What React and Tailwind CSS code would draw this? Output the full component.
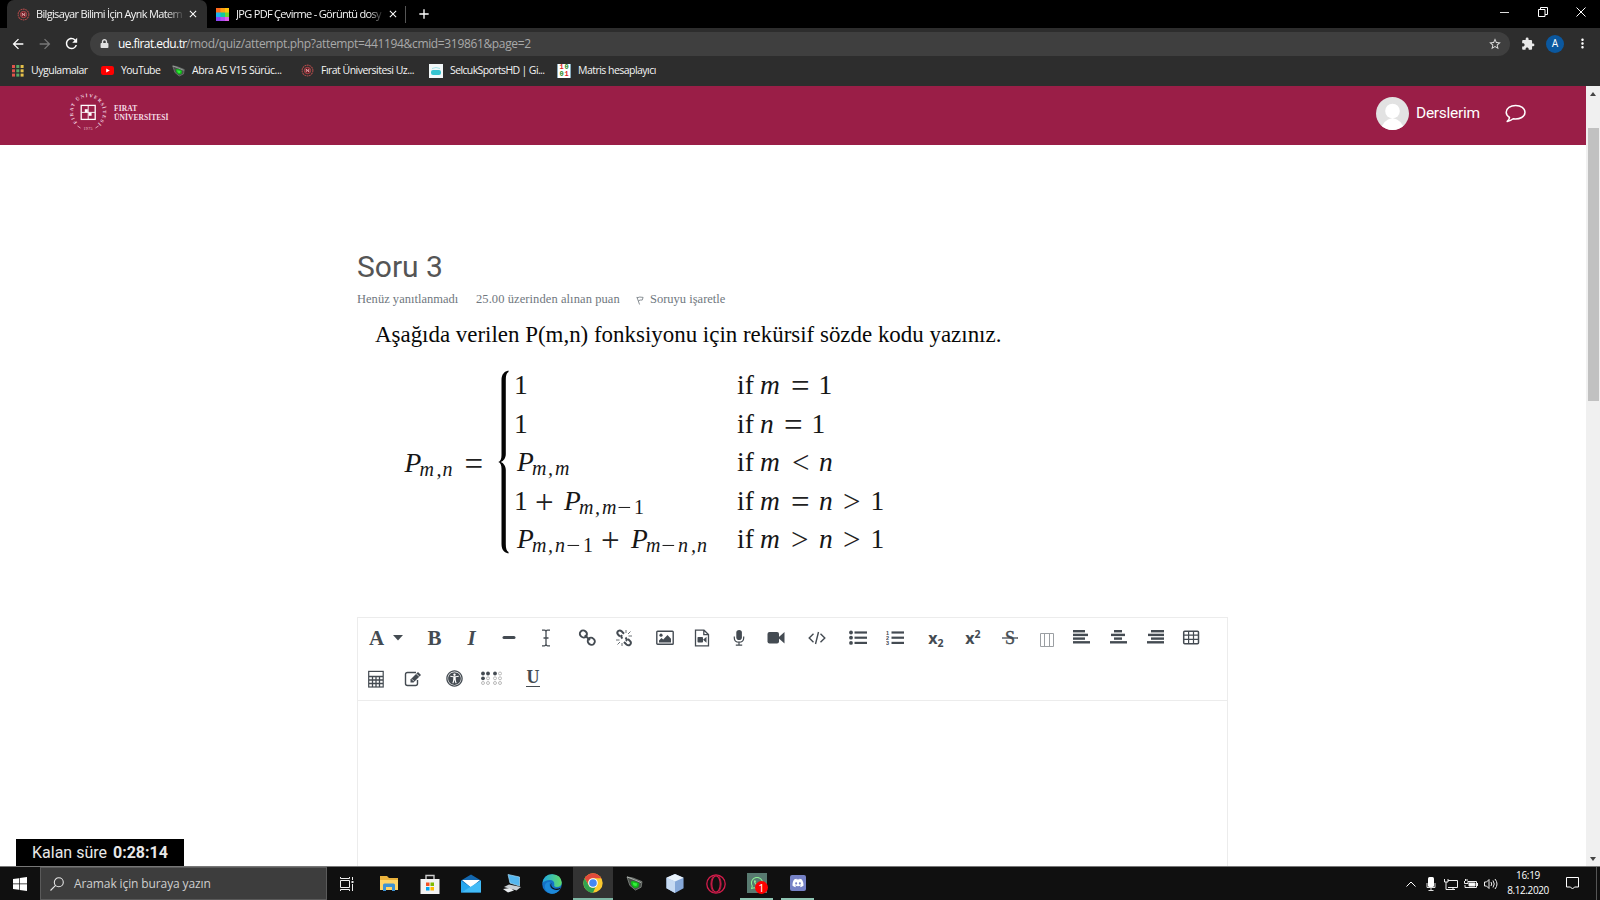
import React from "react";
import { FaUniversalAccess, FaDiscord, FaWhatsapp, FaLock } from "react-icons/fa";
import { MdExtension, MdRefresh, MdArrowBack, MdArrowForward, MdStarBorder, MdMoreVert, MdAdd, MdClose } from "react-icons/md";

const ui = "font-['Open_Sans','Noto_Sans',sans-serif] whitespace-nowrap";

function UniIcon({ className }) {
  return (
    <svg viewBox="0 0 14 14" className={className} fill="none">
      <circle cx="7" cy="7" r="5.8" stroke="#b04a4a" strokeWidth="1.1" strokeDasharray="2 .6" />
      <circle cx="7" cy="7" r="3.4" fill="#6d1520" stroke="#c25a5a" strokeWidth=".8" />
      <path d="M5.7 8.8V5.4L8.3 8.6V5.2" stroke="#e9b9b9" strokeWidth=".9" />
    </svg>
  );
}

function MonsterIcon({ className }) {
  return (
    <svg viewBox="0 0 18 16" className={className}>
      <path d="M1 1L7 2L17 6L16 12L10 15L4 10Z" fill="#4a4f4b" stroke="#8a908b" strokeWidth=".8" />
      <path d="M1 1L9 4L16 7" stroke="#b5bab6" fill="none" />
      <path d="M5 6Q9 4 14 8L13 12L9 13Q5 10 5 6Z" fill="#12b81a" />
      <path d="M7 7L12 8L11 11L8 10Z" fill="#35f03c" />
    </svg>
  );
}

function TabStrip() {
  return (
    <div className="flex h-[28px] bg-black pl-[7px]">
      <div className="flex h-full w-[200px] items-center rounded-t-[7px] bg-[#2d2d2d] pl-[10px]">
        <UniIcon className="h-[13px] w-[13px] shrink-0" />
        <span className={`${ui} ml-[6px] w-[149px] text-[11px] tracking-[-0.660px] text-[#f4f4f4] [mask-image:linear-gradient(90deg,black_88%,transparent)]`}>
          Bilgisayar Bilimi İçin Ayrık Matem
        </span>
        <MdClose className="ml-[2px] h-[12px] w-[12px] shrink-0 text-white" />
      </div>
      <div className="flex h-full w-[199px] items-center pl-[9px]">
        <svg viewBox="0 0 13 13" className="h-[13px] w-[13px] shrink-0">
          <rect width="5" height="5" fill="#ff6a1c" /><rect x="4.5" width="4.5" height="5" fill="#ffa011" /><rect x="9" width="4" height="5" fill="#ffc40d" />
          <rect y="4.5" width="5" height="4.5" fill="#19b5f1" /><rect x="4.5" y="4.5" width="4.5" height="4.5" fill="#10c9a0" /><rect x="9" y="4.5" width="4" height="4.5" fill="#6fd62d" />
          <rect y="9" width="5" height="4" fill="#8b46f5" /><rect x="4.5" y="9" width="4.5" height="4" fill="#b14cf2" /><rect x="9" y="9" width="4" height="4" fill="#e05ce8" />
        </svg>
        <span className={`${ui} ml-[7px] w-[148px] text-[11px] tracking-[-0.680px] text-[#f4f4f4] [mask-image:linear-gradient(90deg,black_90%,transparent)]`}>
          JPG PDF Çevirme - Görüntü dosy
        </span>
        <MdClose className="ml-[3px] h-[12px] w-[12px] shrink-0 text-white" />
        <div className="ml-[6px] h-[17px] w-px shrink-0 bg-[#555]" />
      </div>
      <div className="flex items-center pl-[10px]">
        <MdAdd className="h-[16px] w-[16px] text-white" />
      </div>
      <div className="ml-auto flex h-[24px] items-center text-white">
        <svg viewBox="0 0 9 9" className="h-[9px] w-[9px]"><path d="M0 4.5H9" stroke="#ddd" /></svg>
        <svg viewBox="0 0 10 10" className="ml-[29px] h-[10px] w-[10px]" fill="none" stroke="#fff"><path d="M.5 2.5H7V9.5H.5ZM2.5 2.5V.5H9.5V7.5H7" /></svg>
        <svg viewBox="0 0 10 10" className="mr-[14px] ml-[28px] h-[10px] w-[10px]" stroke="#fff"><path d="M.5 .5L9.5 9.5M9.5 .5L.5 9.5" /></svg>
      </div>
    </div>
  );
}

function AddressBar() {
  return (
    <div className="flex h-[31px] items-center bg-[#2d2d2d]">
      <MdArrowBack className="ml-[10px] h-[16px] w-[16px] text-white" />
      <MdArrowForward className="ml-[11px] h-[16px] w-[16px] text-[#777]" />
      <MdRefresh className="ml-[10px] h-[17px] w-[17px] text-white" />
      <div className="ml-[10px] flex h-[24px] w-[1420px] items-center rounded-full bg-[#3f3f3f] pl-[10px]">
        <FaLock className="h-[9px] w-[9px] text-[#e0e0e0]" />
        <span className={`${ui} ml-[9px] flex-1 text-[12px] text-[#a9a9a9]`}>
          <span className="inline-block w-[68px] tracking-[-0.560px] text-white">ue.firat.edu.tr</span>
          <span className="tracking-[-0.345px]">/mod/quiz/attempt.php?attempt=441194&amp;cmid=319861&amp;page=2</span>
        </span>
        <MdStarBorder className="mr-[8px] h-[14px] w-[14px] text-[#ddd]" />
      </div>
      <MdExtension className="ml-[11px] h-[14px] w-[14px] text-[#e8e8e8]" />
      <div className="ml-[11px] flex h-[18px] w-[18px] items-center justify-center rounded-full bg-[#0b589f] font-['Roboto',sans-serif] text-[10px] text-white">A</div>
      <MdMoreVert className="ml-[11px] h-[15px] w-[15px] text-white" />
    </div>
  );
}

function Bookmark({ width, icon, children, track }) {
  return (
    <div className={`flex items-center ${width}`}>
      {icon}
      <span className={`${ui} ml-[7px] text-[10.500px] text-[#f4f4f4] ${track}`}>{children}</span>
    </div>
  );
}

function Bookmarks() {
  const cols = [["#e0544b", 0], ["#58a866", 4.3], ["#e5c04a", 8.6]];
  return (
    <div className="flex h-[27px] items-start bg-[#2d2d2d] pl-[12px] pt-[4px]">
      <Bookmark width="w-[89px]" track="tracking-[-0.480px]" icon={
        <svg viewBox="0 0 12 12" className="h-[12px] w-[12px] shrink-0">
          {cols.map(([c, x]) => [0, 4.3, 8.6].map((y) => <rect key={x + "-" + y} x={x} y={y} width="3" height="3" fill={c} />))}
        </svg>}>Uygulamalar</Bookmark>
      <Bookmark width="w-[71px]" track="tracking-[-0.550px]" icon={
        <svg viewBox="0 0 13 9" className="h-[9px] w-[13px] shrink-0"><rect width="13" height="9" rx="2.2" fill="#f00" /><path d="M5.2 2.5L8.8 4.5L5.2 6.5Z" fill="#fff" /></svg>}>YouTube</Bookmark>
      <Bookmark width="w-[129px]" track="tracking-[-0.450px]" icon={<MonsterIcon className="h-[12px] w-[13px] shrink-0" />}>Abra A5 V15 Sürüc...</Bookmark>
      <Bookmark width="w-[128px]" track="tracking-[-0.520px]" icon={<UniIcon className="h-[13px] w-[13px] shrink-0" />}>Fırat Üniversitesi Uz...</Bookmark>
      <Bookmark width="w-[128px]" track="tracking-[-0.620px]" icon={
        <svg viewBox="0 0 14 14" className="h-[14px] w-[14px] shrink-0"><rect width="14" height="14" fill="#f2f7f8" /><rect x="2" y="6" width="10" height="5" rx="2" fill="#36c4d0" /><path d="M3 4.5Q7 2.5 11 4.5" stroke="#a3e2e8" fill="none" /></svg>}>SelcukSportsHD | Gi...</Bookmark>
      <Bookmark width="w-[128px]" track="tracking-[-0.530px]" icon={
        <div className="grid h-[14px] w-[14px] shrink-0 grid-cols-2 border-x border-[#8ab] bg-white px-[1px] text-center font-['Liberation_Mono',monospace] text-[7px] leading-[7px] font-bold">
          <span className="text-[#d22]">1</span><span className="text-[#282]">0</span><span className="text-[#282]">0</span><span className="text-[#d22]">1</span>
        </div>}>Matris hesaplayıcı</Bookmark>
    </div>
  );
}

function UniversityLogo() {
  return (
    <svg viewBox="0 0 38 38" className="h-[38px] w-[38px]" fill="none">
      <defs><path id="ring" d="M19 34A15 15 0 1 1 19.1 34" /></defs>
      <text className="font-['Liberation_Serif',serif] font-bold" fontSize="4.800" fill="#f3d9e1">
        <textPath href="#ring" startOffset="12" textLength="71">FIRAT ÜNİVERSİTESİ</textPath>
      </text>
      <text x="14.500" y="37" className="font-['Liberation_Serif',serif]" fontSize="4" fill="#edc9d5" textLength="9">1975</text>
      <path d="M8.500 33L11.500 35M29.500 33L26.500 35" stroke="#edc9d5" strokeWidth=".8" />
      <rect x="12.2" y="12.400" width="14" height="14" stroke="#fff" strokeWidth="1.3" />
      <path d="M19.2 12.500V26M12.5 19.400H26" stroke="#fff" strokeWidth=".9" />
      <rect x="15.800" y="16.200" width="3" height="3" fill="#fff" /><rect x="19.6" y="19.800" width="3" height="3" fill="#fff" />
    </svg>
  );
}

function SiteHeader() {
  return (
    <header className="flex h-[59px] shrink-0 items-center bg-[#9a1e47]">
      <div className="-mt-[7px] ml-[68.500px]"><UniversityLogo /></div>
      <div className="-mt-[6px] ml-[7.500px] w-[56px] font-['Liberation_Serif',serif] text-[7.5px] leading-[9px] font-bold whitespace-nowrap text-[#f5dce4]">
        <div className="tracking-[0.1px]">FIRAT</div>
        <div className="tracking-[0.060px]">ÜNİVERSİTESİ</div>
      </div>
      <div className="mt-[-4px] ml-auto flex items-center">
        <svg viewBox="0 0 33 33" className="h-[33px] w-[33px]">
          <defs><clipPath id="face"><circle cx="16.5" cy="16.5" r="16.5" /></clipPath></defs>
          <g clipPath="url(#face)"><rect width="33" height="33" fill="#e2e2e2" /><circle cx="16.5" cy="14" r="7.3" fill="#fff" /><path d="M5 33Q6.500 23 16.500 21Q26.500 23 28 33Z" fill="#fff" /></g>
        </svg>
        <span className="ml-[7px] w-[65px] font-['Roboto',sans-serif] text-[15.500px] tracking-[-0.260px] whitespace-nowrap text-white">Derslerim</span>
        <svg viewBox="0 0 21 19" className="mr-[60px] ml-[24px] h-[19px] w-[21px]" fill="none" stroke="#fff" strokeWidth="1.500" strokeLinejoin="round"><path d="M10.700 1.500C5.300 1.500 1.200 4.500 1.200 8.300C1.200 10.500 2.500 12.200 4.500 13.500C4.400 15 3.500 16.300 2.200 17.400C4.800 17 6.800 16 8.200 14.800C15 15.600 20 12.700 20 8.300C20 4.500 16 1.500 10.700 1.500Z" /></svg>
      </div>
    </header>
  );
}

const I = ({ w, children }) => <span className={`inline-block italic ${w}`}>{children}</span>;
const R = ({ w, children }) => <span className={`inline-block ${w}`}>{children}</span>;
const Op = ({ w, children }) => <span className={`relative top-[3px] left-[1px] inline-block text-[33px] leading-none text-[#222] ${w}`}>{children}</span>;
const Lt = ({ w, children }) => <span className={`relative top-[2px] inline-block text-[31px] leading-none text-[#222] ${w}`}>{children}</span>;
const Sub = ({ w, up, children }) => <span className={`relative top-[4px] inline-block text-[20px] leading-none ${up ? "" : "italic"} ${w}`}>{children}</span>;

function Formula() {
  const row = "h-[38.500px] leading-[38.500px] whitespace-nowrap";
  return (
    <div className="mt-[16px] flex h-[193px] items-start pl-[47.500px] font-['Liberation_Serif',serif] text-[27.500px] text-[#161616]">
      <div className="mt-[77.500px] w-[93.500px] leading-[38px] whitespace-nowrap">
        <I w="w-[15px]">P</I><Sub w="w-[17px]">m</Sub><Sub w="w-[6px]">,</Sub><Sub w="w-[21px]">n</Sub><Op w="w-[19px]">=</Op>
      </div>
      <svg viewBox="0 0 12 184" className="mt-[4px] h-[184px] w-[12px]"><path d="M10.500 .5C6.500 1.500 3.500 4 3.500 10V85C3.500 89 2.500 91.500 .3 92C2.500 92.500 3.500 95 3.500 99V174C3.500 180 6.500 182.500 10.500 183.500V182C8.500 181 7.800 178.500 7.800 174V100C7.800 96 5.500 93 2.800 92C5.500 91 7.800 88 7.800 84V10C7.800 5.500 8.500 3 10.500 2Z" fill="#050505" /></svg>
      <div className="mt-[0.400px] ml-[7px] w-[220px]">
        <div className={row}><R w="-ml-[3px]">1</R></div>
        <div className={row}><R w="-ml-[3px]">1</R></div>
        <div className={row}><I w="w-[15px]">P</I><Sub w="w-[16px]">m</Sub><Sub w="w-[7px]">,</Sub><Sub w="w-[14px]">m</Sub></div>
        <div className={row}><R w="-ml-[3px] w-[20px]">1</R><Op w="w-[30px]">+</Op><I w="w-[15px]">P</I><Sub w="w-[16px]">m</Sub><Sub w="w-[7px]">,</Sub><Sub w="w-[17px]">m</Sub><Sub up w="w-[15px] scale-x-125">−</Sub><Sub up w="w-[10px]">1</Sub></div>
        <div className={row}><I w="w-[15px]">P</I><Sub w="w-[16px]">m</Sub><Sub w="w-[7px]">,</Sub><Sub w="w-[13px]">n</Sub><Sub up w="w-[15px] scale-x-125">−</Sub><Sub up w="w-[17px]">1</Sub><Op w="w-[31px]">+</Op><I w="w-[15px]">P</I><Sub w="w-[17px]">m</Sub><Sub up w="w-[15px] scale-x-125">−</Sub><Sub w="w-[13px]">n</Sub><Sub w="w-[6px]">,</Sub><Sub w="w-[12px]">n</Sub></div>
      </div>
      <div className="mt-[0.400px]">
        <div className={row}><R w="w-[23px]">if</R><I w="w-[30px]">m</I><Op w="w-[28.500px]">=</Op><R w="w-[12px]">1</R></div>
        <div className={row}><R w="w-[23px]">if</R><I w="w-[23px]">n</I><Op w="w-[28.500px]">=</Op><R w="w-[12px]">1</R></div>
        <div className={row}><R w="w-[23px]">if</R><I w="w-[32px]">m</I><Lt w="w-[27px]">&lt;</Lt><I w="w-[12px]">n</I></div>
        <div className={row}><R w="w-[23px]">if</R><I w="w-[30px]">m</I><Op w="w-[29px]">=</Op><I w="w-[24px]">n</I><Lt w="w-[27.500px]">&gt;</Lt><R w="w-[12px]">1</R></div>
        <div className={row}><R w="w-[23px]">if</R><I w="w-[31px]">m</I><Lt w="w-[28px]">&gt;</Lt><I w="w-[24px]">n</I><Lt w="w-[27.500px]">&gt;</Lt><R w="w-[12px]">1</R></div>
      </div>
    </div>
  );
}

const Cell = ({ ml = "", children }) => <span className={`flex h-[24px] w-[24px] shrink-0 items-center justify-center ${ml}`}>{children}</span>;
const Svg = ({ children, w = 18 }) => <svg viewBox={`0 0 ${w} 18`} width={w} height="18" className="shrink-0" fill="none" stroke="currentColor">{children}</svg>;
const glyph = "font-['Liberation_Serif',serif] text-[21px] leading-none font-bold";
const Lines = ({ rows }) => <Svg>{rows.map(([a, b], i) => <path key={i} strokeWidth="2.400" d={`M${a} ${2.2 + i * 3.700}H${b}`} />)}</Svg>;

function EditorToolbar() {
  return (
    <div className="h-[83px] border-b border-[#ececec] text-[#444b52]">
      <div className="flex h-[40px] items-center pl-[6.500px]">
        <Cell><span className={glyph}>A</span></Cell>
        <svg viewBox="0 0 10 6" className="ml-[4px] h-[6px] w-[10px] shrink-0"><path d="M0 0H10L5 5.500Z" fill="currentColor" /></svg>
        <Cell ml="ml-[20px]"><span className={glyph}>B</span></Cell>
        <Cell ml="ml-[13px]"><span className={`${glyph} italic`}>I</span></Cell>
        <Cell ml="ml-[13px]"><Svg><path strokeWidth="3" strokeLinecap="round" d="M4 8.500H14" /></Svg></Cell>
        <Cell ml="ml-[13px]"><Svg><path strokeWidth="1.300" d="M5 1.200H7.500Q9 1.200 9 3V15Q9 16.800 7.500 16.800H5M13 1.200H10.500Q9 1.200 9 3M9 15Q9 16.800 10.500 16.800H13M6.500 9H11.500" /></Svg></Cell>
        <Cell ml="ml-[17px]"><Svg><g transform="rotate(43 9 9)" strokeWidth="1.900"><rect x="0" y="5.200" width="7.200" height="6.600" rx="3.200" /><rect x="10.800" y="5.200" width="7.200" height="6.600" rx="3.200" /><path d="M5.500 8.500H12.500" /></g></Svg></Cell>
        <Cell ml="ml-[13px]"><Svg><path strokeWidth="2" d="M5 7.500L3 5.500Q1.500 3.500 3.200 2Q5 .8 6.600 2.300L9 4.700M13 10L15.500 12.500Q16.500 14.500 15 15.700Q13.300 17 11.500 15.500L9 13M7 6Q5.500 8 7.500 9.500M11 12Q12.500 10.500 10.500 8.500" /><path strokeWidth=".8" d="M11 1V4M13 5L15.500 2.500M13.500 7H17M1 11H4.500M2.500 15.500L5 13M7 14V17" /></Svg></Cell>
        <Cell ml="ml-[17px]"><Svg><rect x=".8" y="2.300" width="16.400" height="13" rx=".8" strokeWidth="1.400" /><circle cx="5" cy="6.200" r="1.600" fill="currentColor" stroke="none" /><path d="M3 13.500V11.500L5.500 9L7.200 10.500L11.500 6L15 9.700V13.500Z" fill="currentColor" stroke="none" /></Svg></Cell>
        <Cell ml="ml-[13px]"><Svg><path strokeWidth="1.300" d="M2.500 1.200H11L15.500 5.500V16.800H2.500ZM10.800 1.500V5.700H15.200" /><rect x="4.500" y="8" width="5.500" height="5.500" rx=".8" fill="currentColor" stroke="none" /><path d="M10 10.700L13.500 7.800V13.700Z" fill="currentColor" stroke="none" /></Svg></Cell>
        <Cell ml="ml-[13px]"><Svg><rect x="6.300" y="1" width="5.600" height="10" rx="2.800" fill="currentColor" stroke="none" /><path strokeWidth="1.200" d="M4.300 7.500V9Q4.300 13.200 9 13.200Q13.700 13.200 13.700 9V7.500M9 13.200V16.200M5.800 16.200H12.200" /></Svg></Cell>
        <Cell ml="ml-[13px]"><Svg><rect x=".5" y="3" width="11.500" height="11.500" rx="2" fill="currentColor" stroke="none" /><path d="M11 8.800L17.500 3V14.500Z" fill="currentColor" stroke="none" /></Svg></Cell>
        <Cell ml="ml-[17px]"><Svg><path strokeWidth="1.400" d="M5.500 4.800L1.200 9L5.500 13.200M12.500 4.800L16.800 9L12.500 13.200M10.500 3L7.500 15" /></Svg></Cell>
        <Cell ml="ml-[17.500px]"><Svg>{[3.500, 8.700, 13.900].map((y) => <g key={y}><circle cx="2" cy={y} r="1.900" fill="currentColor" stroke="none" /><path strokeWidth="2.200" d={`M5.500 ${y}H18`} /></g>)}</Svg></Cell>
        <Cell ml="ml-[13px]"><Svg>{[3.500, 8.700, 13.900].map((y, i) => <g key={y}><text x="0" y={y + 2} className="font-['Liberation_Sans',sans-serif] font-bold" fontSize="5.500" fill="currentColor" stroke="none">{i + 1}</text><path strokeWidth="2.200" d={`M5.500 ${y}H18`} /></g>)}</Svg></Cell>
        <Cell ml="ml-[17px]"><span className="font-['Open_Sans',sans-serif] text-[16px] leading-none font-bold whitespace-nowrap">x<span className="relative top-[3px] text-[10.500px]">2</span></span></Cell>
        <Cell ml="ml-[13px]"><span className="font-['Open_Sans',sans-serif] text-[16px] leading-none font-bold whitespace-nowrap">x<span className="relative -top-[6px] text-[10.500px]">2</span></span></Cell>
        <Cell ml="ml-[13px]"><Svg><text x="4" y="15" className="font-['Liberation_Serif',serif]" fontSize="18" fill="currentColor" strokeWidth=".4">S</text><path strokeWidth="1.300" d="M1 9H17" /></Svg></Cell>
        <Cell ml="ml-[13px]"><Svg><path stroke="#9b9fa3" d="M2.500 4.500H15.500V17.500H2.500ZM6.500 4.500V17.500M11.500 4.500V17.500" /></Svg></Cell>
        <Cell ml="ml-[10px]"><Lines rows={[[1, 13], [1, 16], [1, 13], [1, 18]]} /></Cell>
        <Cell ml="ml-[13px]"><Lines rows={[[5, 13], [2, 16], [5, 13], [1, 18]]} /></Cell>
        <Cell ml="ml-[13px]"><Lines rows={[[5, 18], [2, 18], [5, 18], [1, 18]]} /></Cell>
        <Cell ml="ml-[12px]"><Svg><rect x="1.700" y="2.200" width="14.800" height="12.500" rx="1" strokeWidth="1.500" /><path strokeWidth="1.200" d="M2 6.200H16M2 10.400H16M6.600 3V14.500M11.500 3V14.500" /></Svg></Cell>
      </div>
      <div className="flex h-[41px] items-center pl-[6px]">
        <Cell><Svg><rect x="1.700" y="1.400" width="14.500" height="15.600" strokeWidth="1.200" /><path strokeWidth="1.300" d="M2 6.500H16M2 10H16M2 13.500H16M5.500 6.500V17M9 6.500V17M12.500 6.500V17" /></Svg></Cell>
        <Cell ml="ml-[13px]"><Svg><path strokeWidth="1.400" d="M12 2.500H3.500Q1.500 2.500 1.500 4.500V13.500Q1.500 15.500 3.500 15.500H11.500Q13.500 15.500 13.500 13.500V10" /><path d="M6.500 9.500L14 2L17 5L9.500 12.500H6.500Z" fill="currentColor" stroke="none" /><path stroke="#fff" strokeWidth=".8" d="M12.300 3.700L15.300 6.700M8 9.300L10 11.300" /></Svg></Cell>
        <Cell ml="ml-[17px]"><FaUniversalAccess className="h-[17px] w-[17px]" /></Cell>
        <Cell ml="ml-[14px]"><Svg w={22}>{[2, 7, 14, 19].map((x, c) => [3.500, 8.300, 13].map((y, r) => { const on = (c === 0 && r < 2) || (c < 3 && r === 0); return <circle key={`${c}${r}`} cx={x} cy={y} r={on ? 1.900 : 1.500} fill={on ? "currentColor" : "none"} stroke={on ? "none" : "#aaa"} strokeWidth=".8" />; }))}</Svg></Cell>
        <Cell ml="ml-[17px]"><span className="h-[17px] w-[14px] border-b border-current text-center font-['Liberation_Serif',serif] text-[18px] leading-[15px] font-bold">U</span></Cell>
      </div>
    </div>
  );
}

function Quiz() {
  return (
    <main className="flex min-h-0 flex-1 flex-col bg-white pl-[357px]">
      <h1 className="mt-[103px] h-[38px] font-['Roboto',sans-serif] text-[30px] leading-[38px] text-[#555]">Soru 3</h1>
      <div className="mt-[4px] flex h-[18px] items-center font-['Liberation_Serif',serif] text-[12.500px] whitespace-nowrap text-[#6f777e]">
        <span className="w-[119px] tracking-[0.020px]">Henüz yanıtlanmadı</span>
        <span className="w-[160px] tracking-[0.080px]">25.00 üzerinden alınan puan</span>
        <svg viewBox="0 0 9 10" className="mt-[3px] h-[9px] w-[8px]" fill="none" stroke="#7b8389"><path d="M1 1L4 9.500M1 2Q4 .5 8 1.500L7 4.500Q4.500 4 2.500 5.500" /></svg>
        <span className="ml-[6px]">Soruyu işaretle</span>
      </div>
      <p className="mt-[12px] h-[30px] pl-[18px] font-['Liberation_Serif',serif] text-[22.930px] leading-[30px] whitespace-nowrap text-[#080808]">Aşağıda verilen P(m,n) fonksiyonu için rekürsif sözde kodu yazınız.</p>
      <Formula />
      <div className="mt-[58px] flex w-[871px] flex-1 flex-col border-x border-t border-[#ececec]">
        <EditorToolbar />
        <div className="flex-1" />
      </div>
    </main>
  );
}

function Scrollbar() {
  return (
    <div className="flex w-[14px] shrink-0 flex-col items-center bg-[#f0f0f0] pt-[6px] pb-[5px]">
      <svg viewBox="0 0 6 4" className="h-[4px] w-[6px]"><path d="M0 4H6L3 0Z" fill="#444" /></svg>
      <div className="mt-[32px] h-[273px] w-[11px] bg-[#c1c1c1]" />
      <svg viewBox="0 0 6 4" className="mt-auto h-[4px] w-[6px]"><path d="M0 0H6L3 4Z" fill="#444" /></svg>
    </div>
  );
}

const TaskItem = ({ w, active = "", children }) => <div className={`flex h-[33px] shrink-0 items-center justify-center ${w} ${active}`}>{children}</div>;

function Taskbar() {
  return (
    <div className="flex h-[34px] shrink-0 border-t border-[#777] bg-[#101010]">
      <div className="flex w-[40px] items-center justify-center">
        <svg viewBox="0 0 14 14" className="h-[14px] w-[14px]" fill="#fff"><path d="M0 2L6 1.200V6.600H0ZM6.700 1.100L14 0V6.600H6.700ZM0 7.300H6V12.800L0 12ZM6.700 7.300H14V14L6.700 12.900Z" /></svg>
      </div>
      <div className="flex h-[33px] w-[287px] items-center border border-[#5a5a5a] bg-[#3d3d3d] pl-[9px]">
        <svg viewBox="0 0 14 14" className="h-[14px] w-[14px]" fill="none" stroke="#e5e5e5" strokeWidth="1.100"><circle cx="8.800" cy="5.200" r="4.500" /><path d="M5.600 8.400L.5 13.500" /></svg>
        <span className={`${ui} ml-[10px] text-[12px] tracking-[-0.110px] text-[#cfcfcf]`}>Aramak için buraya yazın</span>
      </div>
      <TaskItem w="w-[40px]"><svg viewBox="0 0 14 14" className="h-[14px] w-[14px]" fill="none" stroke="#eee"><path d="M.5 3.500H9.500V10.500H.5ZM.5 0V1.500H9.500V0M.5 14V12.500H9.500V14M12.500 0V3M12.500 7V14" /><path d="M11.500 5H13.500" strokeWidth="2" /></svg></TaskItem>
      <TaskItem w="w-[44px]"><svg viewBox="0 0 18 15" className="h-[15px] w-[18px]"><path d="M0 0H7L9 2H18V14H0Z" fill="#eab23c" /><path d="M0 4H18V14H0Z" fill="#ffd567" /><path d="M3 15V9Q3 7.500 4.500 7.500H13.500Q15 7.500 15 9V15H12V11H6V15Z" fill="#3e93d3" /></svg></TaskItem>
      <TaskItem w="w-[37px]"><svg viewBox="0 0 20 20" className="h-[20px] w-[20px]"><path d="M6 6V1.500H14V6" fill="none" stroke="#ccc" strokeWidth="1.400" /><rect x=".5" y="5" width="19" height="15" fill="#f2f2f2" /><rect x="6" y="8.500" width="3.500" height="3.500" fill="#f25022" /><rect x="10.500" y="8.500" width="3.500" height="3.500" fill="#7fba00" /><rect x="6" y="13" width="3.500" height="3.500" fill="#00a4ef" /><rect x="10.500" y="13" width="3.500" height="3.500" fill="#ffb900" /></svg></TaskItem>
      <TaskItem w="w-[46px]"><svg viewBox="0 0 20 18" className="h-[19px] w-[20px]"><path d="M0 6L10 0L20 6V18H0Z" fill="#1367ae" /><path d="M1 5.500H19L10 13Z" fill="#fff" /><path d="M0 6L10 13L0 18Z" fill="#29a7ee" /><path d="M20 6L0 18H20Z" fill="#42bbf6" /></svg></TaskItem>
      <TaskItem w="w-[36px]"><svg viewBox="0 0 19 19" className="h-[19px] w-[19px]"><path d="M5 .5L16.500 3V12L7 9Z" fill="#54b6ef" stroke="#a5daf7" strokeWidth=".7" /><path d="M6 10.500L18 13L13.500 16.500L1 13Z" fill="#c9cfd4" /><path d="M0 15L7 14L11 16.500L5 18.500Z" fill="#e8ebee" /></svg></TaskItem>
      <TaskItem w="w-[43px]"><svg viewBox="0 0 20 20" className="h-[20px] w-[20px]"><defs><linearGradient id="edge" x1="0" x2="1"><stop stopColor="#1fa8e2" /><stop offset="1" stopColor="#62dc68" /></linearGradient></defs><circle cx="10" cy="10" r="9.800" fill="#1470c6" /><path d="M.4 9Q2 0 10.500 .2Q19 .8 19.800 8.500Q19.500 13 14.500 13Q11.500 12.700 12.300 10.500Q12.500 6 8 6Q3 6 .4 9Z" fill="url(#edge)" /><path d="M8 8Q6 14 12 16Q15 17 18 15Q14 21 8 19.400Q2 17 3 11Q4 7.500 8 8Z" fill="#1d89d9" /><path d="M9.500 9Q8 12.500 12.500 14.500Q15.500 15.500 18.800 13.500L18 15Q14 17.200 10 14.500Q7 11.500 9.500 9Z" fill="#101010" /></svg></TaskItem>
      <TaskItem w="w-[40px]" active="border-b-2 border-[#7fb8a5] bg-[#333]"><svg viewBox="0 0 20 20" className="h-[20px] w-[20px]"><circle cx="10" cy="10" r="9.700" fill="#fbc92f" /><path d="M1.600 5.200A9.700 9.700 0 0 1 18.400 5.200H10A4.800 4.800 0 0 0 5.800 12.400Z" fill="#e24a3c" /><path d="M1.600 5.200L5.800 12.400A4.800 4.800 0 0 0 12.500 14L10 19.700A9.700 9.700 0 0 1 1.600 5.200Z" fill="#31a350" /><circle cx="10" cy="10" r="4.800" fill="#fff" /><circle cx="10" cy="10" r="3.800" fill="#4387f4" /></svg></TaskItem>
      <TaskItem w="w-[43px]"><MonsterIcon className="h-[15px] w-[17px]" /></TaskItem>
      <TaskItem w="w-[38px]"><svg viewBox="0 0 18 20" className="h-[19px] w-[18px]"><path d="M9 0L18 4V15L9 20L0 15V4Z" fill="#86a8d8" /><path d="M0 4L9 8V20L0 15Z" fill="#c7daf2" /><path d="M0 4L9 0L18 4L9 8Z" fill="#eaf3fb" /></svg></TaskItem>
      <TaskItem w="w-[44px]"><svg viewBox="0 0 20 20" className="h-[20px] w-[20px]" fill="none" stroke="#d31c4b" strokeWidth="1.300"><circle cx="10" cy="10" r="9.200" /><ellipse cx="10" cy="10" rx="4.300" ry="8.200" /><path d="M13 2Q17.500 10 13 18M7 2Q2.500 10 7 18" strokeWidth=".7" /></svg></TaskItem>
      <TaskItem w="ml-[2px] w-[33px]" active="relative border-b-2 border-[#8fc5b2]">
        <div className="flex h-[20px] w-[20px] items-center justify-center bg-[#587a70]"><FaWhatsapp className="h-[14px] w-[14px] text-[#8af094]" /></div>
        <span className="absolute top-[14px] left-[15px] flex h-[13px] w-[13px] items-center justify-center rounded-full bg-[#f00] font-['Open_Sans',sans-serif] text-[11px] leading-none text-white">1</span>
      </TaskItem>
      <TaskItem w="ml-[8px] w-[33px]" active="border-b-2 border-[#8fc5b2]"><div className="flex h-[16px] w-[16px] items-center justify-center rounded-[2px] bg-[#7682c6] text-white"><FaDiscord className="h-[12px] w-[12px]" /></div></TaskItem>
      <div className="ml-auto flex items-center text-white">
        <svg viewBox="0 0 10 6" className="h-[6px] w-[10px]" fill="none" stroke="#fff"><path d="M.5 5.500L5 1L9.500 5.500" /></svg>
        <svg viewBox="0 0 10 14" className="ml-[10px] h-[14px] w-[10px]"><rect x="2" width="6" height="10" rx="1.500" fill="#fff" /><path d="M1 6V10.500H9V6M5 10.500V13.500M2.500 13.500H7.500" fill="none" stroke="#ddd" /></svg>
        <svg viewBox="0 0 14 12" className="ml-[8px] h-[12px] w-[14px]" fill="none" stroke="#eee"><path d="M4 2.500H13.500V9.500H4M7 11.500H11M9 9.500V11.500M.5 1V4H4V1M2 4V11.500H7" /></svg>
        <svg viewBox="0 0 14 10" className="ml-[6px] h-[10px] w-[14px]" fill="none" stroke="#eee"><path d="M4 2.500H12.500V8.500H1V6M13.500 4V7M.5 2V4.500H4V2M1.500 0V2M3 0V2" /><path d="M5 4H11V7H5Z" fill="#fff" /></svg>
        <svg viewBox="0 0 14 12" className="ml-[6px] h-[12px] w-[14px]" fill="none" stroke="#eee"><path d="M.5 4V8H2.500L5 10.500V1.500L2.500 4ZM7 4Q8.500 6 7 8M9 2.500Q11.500 6 9 9.500M11 1Q15 6 11 11" /></svg>
        <div className={`${ui} -mt-[1px] ml-[9px] w-[42px] text-center text-[10px] leading-[15px] tracking-[-0.3px]`}><div>16:19</div><div className="tracking-[-0.400px]">8.12.2020</div></div>
        <svg viewBox="0 0 13 13" className="ml-[17px] h-[13px] w-[13px]" fill="none" stroke="#fff"><path d="M.5 .5H12.500V10H8.500L6.500 12L4.500 10H.5Z" /></svg>
        <div className="mr-[3px] ml-[17px] h-[33px] w-px bg-[#555]" />
      </div>
    </div>
  );
}

export default function App() {
  return (
    <div className="flex h-[900px] w-[1600px] flex-col overflow-hidden bg-white">
      <TabStrip />
      <AddressBar />
      <Bookmarks />
      <div className="relative flex min-h-0 flex-1">
        <div className="flex min-w-0 flex-1 flex-col">
          <SiteHeader />
          <Quiz />
        </div>
        <Scrollbar />
        <div className="absolute bottom-0 left-[16px] flex h-[27px] w-[168px] items-center bg-black pl-[16px] font-['Roboto',sans-serif] text-[16px] whitespace-nowrap text-[#e8e8e8]">
          <span className="w-[81px]">Kalan süre</span><b>0:28:14</b>
        </div>
      </div>
      <Taskbar />
    </div>
  );
}
